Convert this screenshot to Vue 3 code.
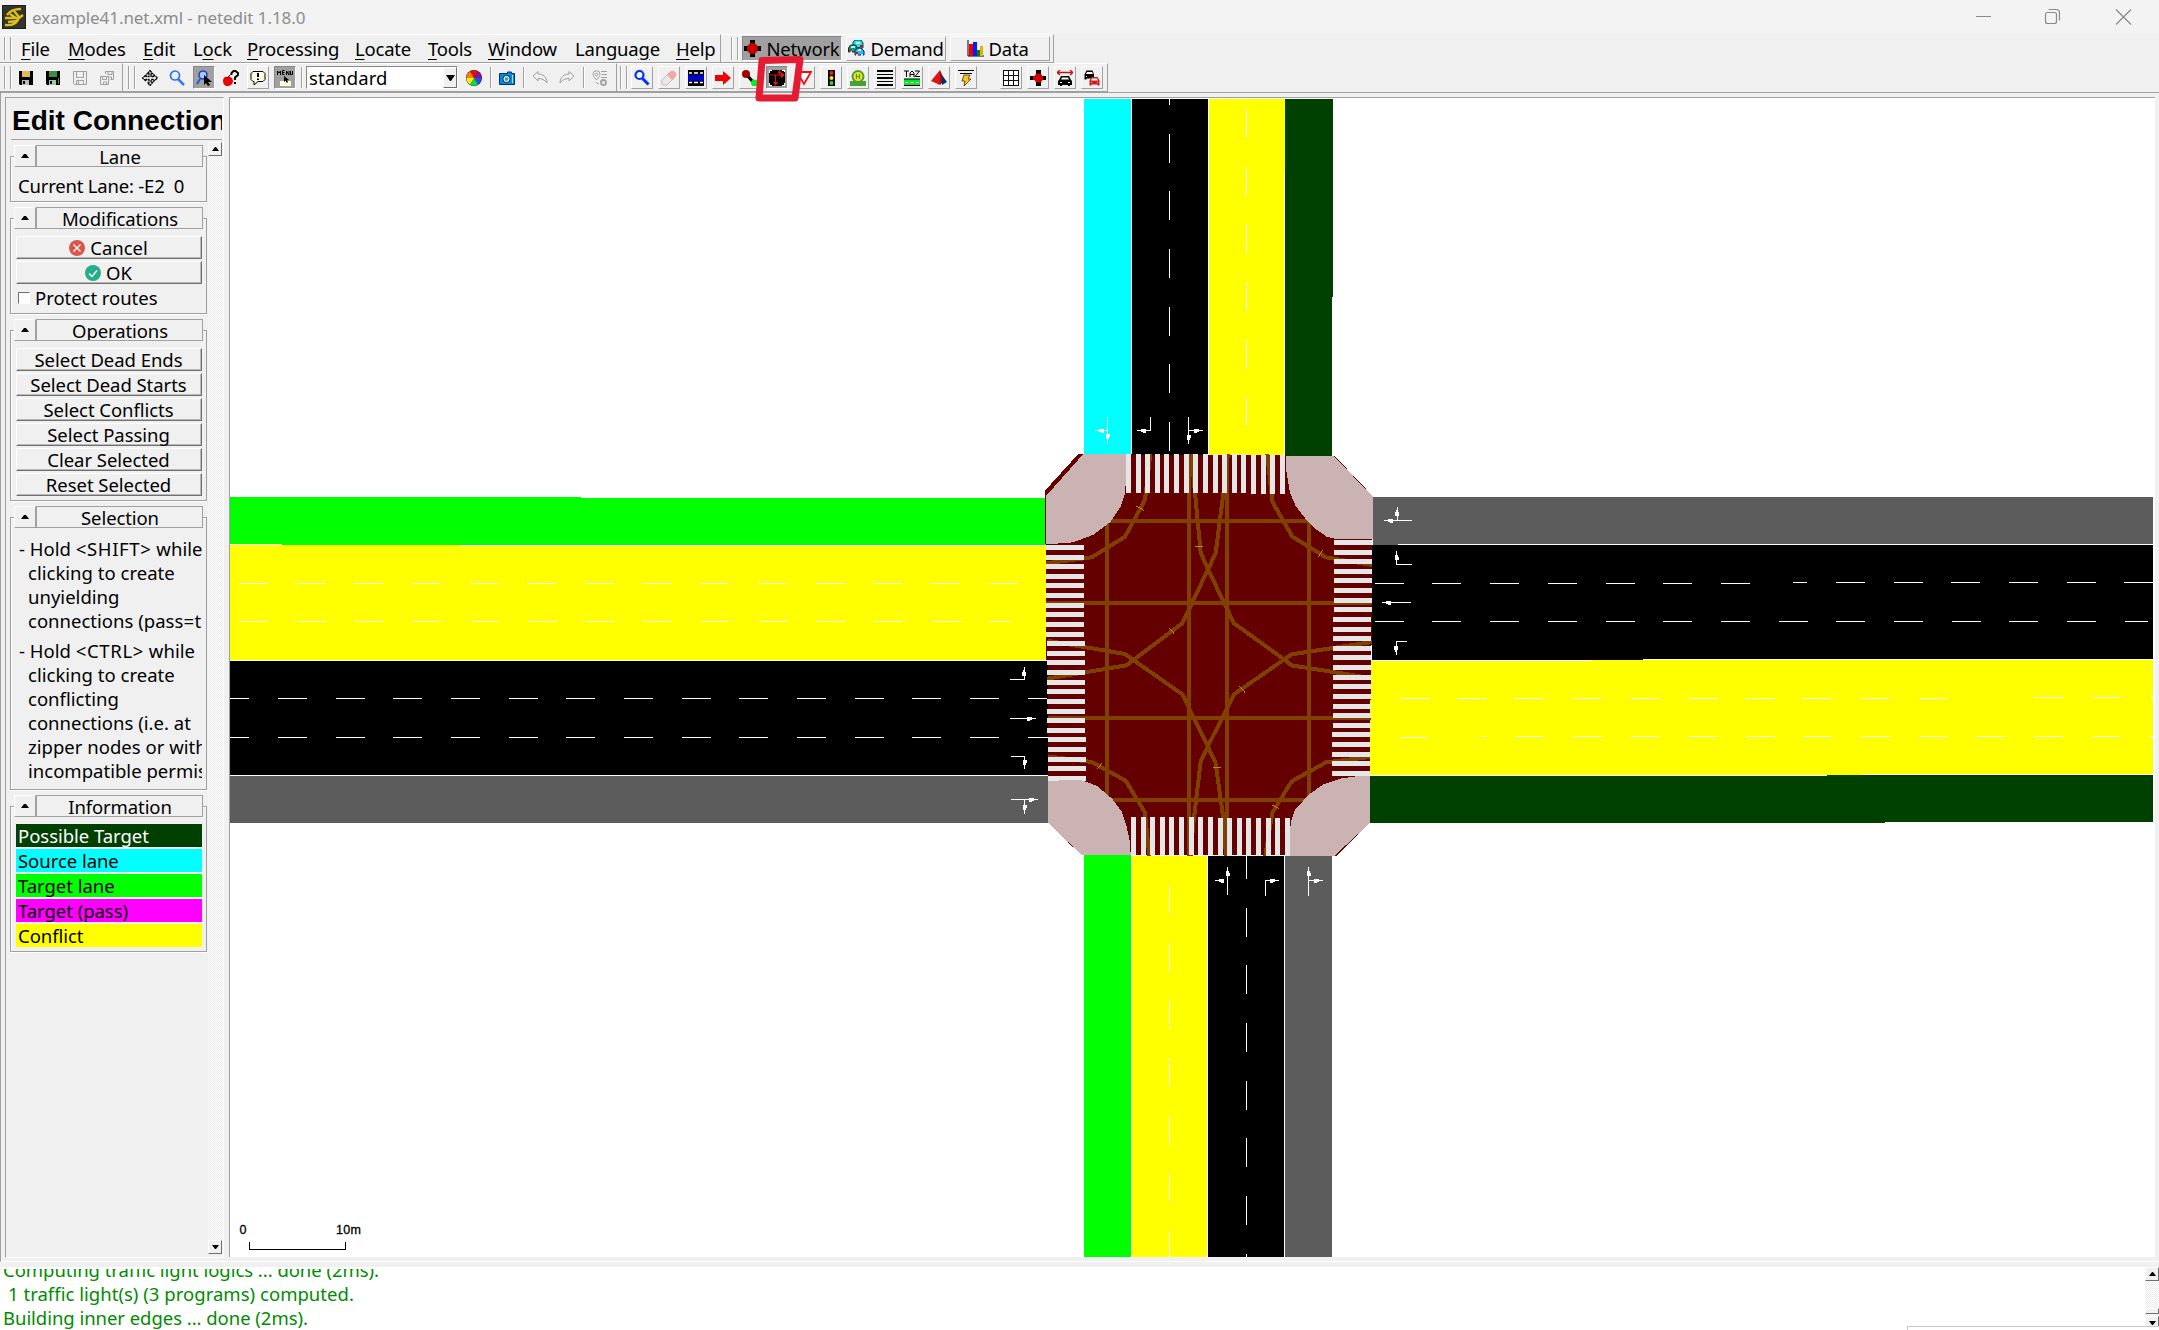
<script setup>
const menus = [
  { k: 'F', t: 'ile', w: 47 }, { k: 'M', t: 'odes', w: 75 }, { k: 'E', t: 'dit', w: 50 },
  { p: 'L', k: 'o', t: 'ck', w: 54 }, { k: 'P', t: 'rocessing', w: 108 }, { k: 'L', t: 'ocate', w: 73 },
  { k: 'T', t: 'ools', w: 60 }, { k: 'W', t: 'indow', w: 87 }, { p: 'Langua', k: 'g', t: 'e', w: 101 }, { k: 'H', t: 'elp', w: 55 }
]
const operations = ['Select Dead Ends', 'Select Dead Starts', 'Select Conflicts', 'Select Passing', 'Clear Selected', 'Reset Selected']
const legend = [
  { t: 'Possible Target', c: 'possible' }, { t: 'Source lane', c: 'source' }, { t: 'Target lane', c: 'target' },
  { t: 'Target (pass)', c: 'pass' }, { t: 'Conflict', c: 'conflict' }
]
const modes = ['inspect', 'delete', 'select', 'move', 'create', 'connection', 'prohibition', 'tls', 'stop', 'crossing', 'taz', 'shape', 'wire']
const views = ['grid', 'junction', 'spread', 'cars']

const range = n => [...Array(n).keys()]
const dashPath = (axis, fixed, start, n, min, max) => range(n).map(i => {
  const a = Math.max(min, Math.round(start + i * 57.68))
  const b = Math.min(max, Math.round(start + i * 57.68) + 29)
  if (b <= a) return ''
  return axis === 'h' ? `M${a} ${fixed}h${b - a}v1h${a - b}z` : `M${fixed} ${a}v${b - a}h1v${a - b}z`
}).join('')
const dashes = [
  dashPath('h', 583, 238.8, 14, 230, 1019), dashPath('h', 621, 239.4, 14, 230, 1011),
  dashPath('h', 698, 220.2, 15, 230, 1047), dashPath('h', 737, 220.2, 15, 230, 1048),
  dashPath('h', 583, 1374.8, 7, 1374, 2153), 'M1793 582h14v1h-14z', dashPath('h', 582, 1836, 6, 1374, 2153),
  dashPath('h', 621, 1374.8, 14, 1374, 2148),
  dashPath('h', 698, 1399.7, 10, 1374, 2153), dashPath('h', 697, 2034.6, 3, 1374, 2153),
  'M1400 737h28v1h-28zM1481 736h5v1h-5z', dashPath('h', 736, 1515, 12, 1374, 2153),
  dashPath('v', 1169, 76, 7, 99, 451), dashPath('v', 1246, 109, 6, 99, 426),
  dashPath('v', 1169, 885, 7, 856, 1257), dashPath('v', 1246, 850, 8, 856, 1257)
].join('')

const stripes = [
  ...range(17).map(i => ({ x: 1126 + i * 9.62, y: 454 + (i > 12 ? 1 : 0), w: 5, h: 39 })),
  ...range(17).map(i => ({ x: 1131 + i * 9.62, y: 817 + (i > 8 ? 1 : 0), w: 5, h: 38 })),
  ...range(25).map(i => ({ x: 1046 + Math.floor(i / 10), y: 545 + i * 9.62, w: 38, h: 5 })),
  ...range(25).map(i => ({ x: 1334 - Math.floor((i + 4) / 12), y: 540 + i * 9.62, w: 38, h: 5 }))
]

// direction, shaft path and arrow tip of each turn marking
const shafts = 'M1107 416v20M1107 430h-8M1150 416v14h-9M1188 416v20M1188 430h9M1227 894v-20M1265 895v-15h8M1308 895v-20M1308 880h9M1009 679h15v-6M1009 718h21M1010 756h14v8M1010 799h21M1024 799v10M1411 520h-21M1397 520v-8M1411 564h-15v-6M1410 602h-21M1406 641h-10v8'
const tips = [
  [1107.5, 443, 180], [1095, 430.5, 270], [1137, 430.5, 270], [1188.5, 444, 180], [1203, 430.5, 90],
  [1227.5, 867, 0], [1215, 880.5, 270], [1279, 880.5, 90], [1308.5, 867, 0], [1323, 880.5, 90],
  [1024, 667, 0], [1036, 718.5, 90], [1024.5, 769, 180], [1038, 799.5, 90], [1024.5, 814, 180],
  [1384, 520.5, 270], [1397, 507, 0], [1396.5, 551, 0], [1382, 602.5, 270], [1396, 655, 180]
]
</script>

<template>
  <div class="app">
    <header class="title">
      <svg class="logo" width="24" height="24" viewBox="0 0 24 24"><rect width="24" height="24" fill="#1d1d1a" /><rect x="1" y="1" width="22" height="22" fill="#34332c" /><path d="M5 10Q9 4 19 4M3 13h14l4-3M8 9l9 6M3 20q10 1 13-5M6 17l10-1M12 6l5 6" stroke="#dcc01c" stroke-width="2.400" fill="none" /></svg>
      <span class="caption">example41.net.xml - netedit 1.18.0</span>
      <svg class="winbtns" width="160" height="34" viewBox="1976 0 160 34" fill="none" stroke="#8a8a8a" stroke-width="1.2"><path d="M1976 16.500h15M2116 9.500l15 15M2131 9.500l-15 15" /><rect x="2045.500" y="12.500" width="11" height="11" rx="2" /><path d="M2048.500 9.500h7.500q3.500 0 3.500 3.500v7.500" /></svg>
    </header>

    <div class="bar menubar">
      <div class="dock menus">
        <i class="grip"></i>
        <nav><span v-for="m in menus" :key="m.t" :style="{ width: m.w + 'px' }">{{ m.p }}<u>{{ m.k }}</u>{{ m.t }}</span></nav>
      </div>
      <div class="dock supers">
        <i class="grip"></i>
        <button class="super on"><svg width="17" height="17" viewBox="0 0 17 17"><path d="M6 0h5v17H6zM0 6h17v5H0z" /><circle cx="8.500" cy="8.500" r="5.500" fill="#c80000" /></svg>Network</button>
        <button class="super"><svg width="17" height="17" viewBox="0 0 17 17"><path d="M5 5V2l2-2h6l2 3v5H5z" fill="#20e0e0" stroke="#045" /><path d="M.500 12V8l2-3h5l2 3v4z" fill="#00a080" stroke="#132" /><path d="M7 15v-4l2-3h4l3 3v4z" fill="#28b8ff" stroke="#024" /><path d="M3 7h4M8 3h4M10 10h3M2 12h2M8 15h2M13 15h2" stroke="#fff" stroke-width="1.500" /><path d="M1 10.500h2M12 6h3M8 13h2" stroke="#e00" stroke-width="2" /></svg>Demand</button>
        <button class="super data"><svg width="17" height="17" viewBox="0 0 17 17"><path d="M1 0v16h16" stroke="#000" fill="none" /><path d="M2 4h4v12H2z" fill="#e00" /><path d="M6 2h4v14H6z" fill="#0020ff" /><path d="M10 10h3v6h-3z" fill="#008000" /><path d="M13 6h3v10h-3z" fill="#e8b000" /></svg>Data</button>
      </div>
    </div>

    <div class="bar toolbar">
      <div class="dock files">
        <i class="grip"></i>
        <span class="tb"><svg viewBox="0 0 16 16"><path d="M1 1h14v14H2L1 14z" /><path d="M4 1h8v6H4z" fill="#ddb860" /><path d="M4 10h7v5H4z" fill="#bbb" /><path d="M5 11h2v3H5z" /></svg></span>
        <span class="tb"><svg viewBox="0 0 16 16"><path d="M1 1h14v14H2L1 14z" /><path d="M4 1h8v6H4zM13 8h1v6h-1z" fill="#3d8f46" /><path d="M4 10h7v5H4z" fill="#9c9" /><path d="M5 11h2v3H5z" /></svg></span>
        <span class="tb"><svg viewBox="0 0 16 16" class="dim"><path d="M1.500 1.500h13v13h-12l-1-1zM4.500 1.500v6h7v-6M4.500 14.500v-4h7v4M6.500 11v3" /></svg></span>
        <span class="tb"><svg viewBox="0 0 16 16" class="dim"><path d="M1.500 6.500h8v8h-8zM3.500 6.500v3h4v-3M4.500 14v-2h3v2M6.500 4V1.500h8v8h-3M9 1.500v3h4v-3M10.500 7h2v2" /></svg></span>
      </div>
      <div class="dock edit">
        <i class="grip"></i>
        <span class="tb"><svg viewBox="0 0 16 16"><path d="M8 .500l2.500 3H9v3h3V5l3.500 3-3.500 3V9.500H9v3h1.500L8 15.500l-2.500-3H7v-3H4V11L.500 8 4 5v1.500h3v-3H5.500z" fill="#fff" stroke="#000" stroke-width="1.300" stroke-dasharray="2.500 .500" /></svg></span>
        <span class="tb"><svg viewBox="0 0 16 16"><circle cx="6" cy="5.500" r="4.500" fill="#dff4ff" stroke="#3c6be0" stroke-width="1.700" /><path d="M9 9l6 6" stroke="#3a76f0" stroke-width="2.500" /></svg></span>
        <span class="tb on"><svg viewBox="0 0 16 16"><circle cx="7" cy="5" r="4" fill="#9fd0f0" stroke="#2040d0" stroke-width="1.600" /><path d="M4 9l-3 5M10 9l3 2" stroke="#2a55e0" stroke-width="2" /><path d="M8 5v10l2-2 2 3 2-1-2-3h4z" /></svg></span>
        <span class="tb"><svg viewBox="0 0 16 16"><path d="M4.500 7C2 6 0 8 0 11s2 5 4.500 5S10 14 10 11 7 6 4.500 7z" fill="#f00000" /><path d="M4.500 8l3-3.500" stroke="#000" /><path d="M8.500 5V3l2-2h2l2.500 2v2l-3 2.500V10" fill="none" stroke="#000" stroke-width="1.900" /><path d="M11 12h2v2h-2z" /></svg></span>
        <span class="tb up"><svg viewBox="0 0 16 16"><path d="M3 1.500h10l2 2v6l-2 2H8L4 15v-3.500H3l-2-2v-6z" fill="#ffffe4" stroke="#000" /><path d="M7 3h2v4H7zM7 8.500h2v1.500H7z" /></svg></span>
        <span class="tb on"><svg viewBox="0 0 16 16"><path d="M3 11h11v5H3z" fill="#ffffdc" /><path d="M.500 5V1l1.500 2L3.500 1v4M7.500.500h-2v4h2M5.500 2.500h2M9.500 5V1l2.500 4V1M13.500 1v3.500h2V1" fill="none" stroke="#000" /><path d="M7 6v6l1.500-1.500L10 13l1-1-1-2h2z" /></svg></span>
        <i class="sep first"></i>
        <div class="combo"><span>standard</span><b><svg width="9" height="6" viewBox="0 0 9 6"><path d="M0 0h9L5 6H4z" /></svg></b></div>
        <span class="tb"><svg viewBox="0 0 16 16"><circle cx="8" cy="8" r="8" fill="#222" /><path d="M8 8L4 1.500A7.500 7.500 0 0 1 12 1.500z" fill="#e01010" /><path d="M8 8l4-6.500A7.500 7.500 0 0 1 15.500 8z" fill="#90109a" /><path d="M8 8h7.500a7.500 7.500 0 0 1-3.500 6.500z" fill="#2050f0" /><path d="M8 8l4 6.500a7.500 7.500 0 0 1-8 0z" fill="#10d840" /><path d="M8 8l-4 6.500A7.500 7.500 0 0 1 .500 8z" fill="#f4f010" /><path d="M8 8H.500A7.500 7.500 0 0 1 4 1.500z" fill="#ff8000" /></svg></span>
        <i class="sep"></i>
        <span class="tb"><svg viewBox="0 0 16 16"><path d="M.500 3.500h8V2h4v1.500h3v11H.500z" fill="#0787e8" stroke="#00305c" /><circle cx="7.500" cy="9" r="3.600" fill="#fff" stroke="#002a50" /><circle cx="7.500" cy="9" r="2" fill="#3a9" /><path d="M13.500 5v8" stroke="#9ee0ff" /></svg></span>
        <i class="sep"></i>
        <span class="tb"><svg viewBox="0 0 16 16" class="dim"><path d="M1 6l5-4.500V4c5 0 9 3 9 9-2-3-5-4.500-9-4.500V11z" /></svg></span>
        <span class="tb"><svg viewBox="0 0 16 16" class="dim"><path d="M15 6l-5-4.500V4c-5 0-9 3-9 9 2-3 5-4.500 9-4.500V11z" /></svg></span>
        <i class="sep"></i>
        <span class="tb"><svg viewBox="0 0 16 16" class="dim"><path d="M4.500 10C2 7 1 6 1 4.200a3.500 3.500 0 0 1 7 0C8 6 7 7 4.500 10zM9 1.500h6M10 4.500h5M9 7.500h6M4 12q1 2 3 2" /><circle cx="4.500" cy="4.500" r="1.300" /><circle cx="11.500" cy="12.500" r="2.500" stroke-width="1.800" /></svg></span>
      </div>
      <div class="dock modes">
        <i class="grip"></i>
        <span v-for="m in modes" :key="m" class="tb up" :class="{ on: m === 'connection' }">
          <svg viewBox="0 0 16 16">
            <template v-if="m === 'inspect'"><circle cx="5.500" cy="5" r="4" fill="#fff" stroke="#0030ff" stroke-width="2.200" /><path d="M8.500 8.500l6 6" stroke="#0030ff" stroke-width="3" /></template>
            <template v-if="m === 'delete'"><path d="M1 10l8-8q2-1.500 5 0 2 3 0 5l-8 8q-3 1-5-1-1-2 0-4z" fill="#eee6e6" stroke="#aaa" stroke-width=".700" /><path d="M6 5l3-3q2-1.500 5 0 2 3 0 5l-3 3z" fill="#f0a8a8" /></template>
            <template v-if="m === 'select'"><path d="M0 0h16v16H0z" /><path d="M0 5h16v6H0z" fill="#0000c8" /><path d="M1 3h3M6 3h4M12 3h3M1 12.500h3M6 12.500h4M12 12.500h3" stroke="#fff" stroke-width="1.300" /></template>
            <path v-if="m === 'move'" d="M0 5h8V1l8 7-8 7v-4H0z" fill="#f00000" />
            <template v-if="m === 'create'"><path d="M5 5l6 7" stroke="#000" stroke-width="3" /><circle cx="4" cy="4" r="4" fill="#a00000" /><circle cx="12.500" cy="13" r="3.500" fill="#00f020" /></template>
            <template v-if="m === 'connection'"><path d="M0 0h16v16H0z" /><path d="M1 5h13M6.500 5v9M10.500 5V1" fill="none" stroke="#e01010" stroke-width="1.200" /><path d="M4 12h5l-2.500 4zM12 2l4 3-4 3zM8.500 3h4l-2-3z" fill="#f01010" /><path d="M0 0h3v1H1v2H0zM13 0h3v2h-1V1h-2zM0 13h1v2h2v1H0zM15 13h1v3h-3v-1h2z" fill="#fff" /></template>
            <path v-if="m === 'prohibition'" d="M1 2h14L8 14z" fill="#fff" stroke="#f01010" stroke-width="1.800" />
            <template v-if="m === 'tls'"><path d="M5 0h7v16H5z" /><circle cx="8.500" cy="3" r="2" fill="#f02020" /><circle cx="8.500" cy="8" r="2" fill="#ffe020" /><circle cx="8.500" cy="13" r="2" fill="#20e020" /></template>
            <template v-if="m === 'stop'"><circle cx="8" cy="6.500" r="6.500" fill="#48a038" /><path d="M0 11h16v5H0z" fill="#48a038" /><circle cx="8" cy="6.500" r="4.500" fill="#f4e020" /><path d="M6.500 4v5M9.500 4v5M6.500 6.500h3" stroke="#48a038" stroke-width="1.200" /></template>
            <path v-if="m === 'crossing'" d="M0 0h16v2H0zM0 4h16v1H0zM0 7h16v2H0zM0 11h16v1H0zM0 14h16v2H0z" />
            <template v-if="m === 'taz'"><path d="M0 1h5M2.500 1v6M6 7V3l2-2 2 2v4M6 4.500h4M11 1h4.500L11 6.500h5" fill="none" stroke="#000" /><path d="M0 9h16v7H0z" fill="#00e820" /><path d="M0 9h16M0 15.500h16" stroke="#000" /><path d="M1 12.500h3M6 12.500h4M12 12.500h3" stroke="#fff" /></template>
            <template v-if="m === 'shape'"><path d="M9 0L0 11l9 4z" fill="#d81818" /><path d="M9 0v15l3-3V7z" fill="#901010" /><path d="M11 5l5 7-5 3z" fill="#003070" /></template>
            <template v-if="m === 'wire'"><path d="M0 .500h16M2 3.500h12" stroke="#000" /><path d="M6 5h6l-2 4h3l-7 7 1-5H4z" fill="#ffc820" stroke="#403000" stroke-width=".800" /></template>
          </svg>
        </span>
        <i class="gap"></i>
        <span v-for="v in views" :key="v" class="tb up">
          <svg viewBox="0 0 16 16">
            <path v-if="v === 'grid'" d="M.500.500h15v15H.500zM.500 5.500h15M.500 10.500h15M5.500.500v15M10.500.500v15" fill="#fff" stroke="#111" shape-rendering="crispEdges" />
            <template v-if="v === 'junction'"><path d="M6 0h5v16H6zM0 6h16v4H0z" /><path d="M3 6h10v4H3z" fill="#d00000" /><circle cx="8.500" cy="8" r="4.500" fill="#d00000" /></template>
            <template v-if="v === 'spread'"><path d="M1 2.500h14M3 0L0 2.500 3 5M13 0l3 2.500L13 5" fill="none" stroke="#c01010" stroke-width="1.300" /><path d="M4 6h8l2 4 1 1v4h-2v1h-2v-1H5v1H3v-1H1v-4l1-1z" /><path d="M5 7.500h6l1 2H4zM3 12h2v1H3zM11 12h2v1h-2z" fill="#fff" /></template>
            <template v-if="v === 'cars'"><path d="M2.500.500h6l1.500 4v5H8v-1H2.500v1h-2v-5z" /><path d="M3 2h5l1 2H2z" fill="#fff" /><path d="M7.500 7h6l2 3.500v5h-2v-1h-6v1h-2v-5z" fill="#d01818" /><path d="M8 8.500h5l1 2H7z" fill="#fff" /><path d="M7 12h1v1H7zM13 12h1v1h-1zM2 6h1v1H2z" fill="#fff" /></template>
          </svg>
        </span>
      </div>
      <svg class="marker" width="60" height="56" viewBox="750 52 60 56"><path d="M762 60.500l38-1-5 38.500h-36z" fill="none" stroke="#e31b33" stroke-width="7" stroke-linejoin="round" /></svg>
    </div>

    <main>
      <aside>
        <h1>Edit Connection</h1>
        <div class="scrollarea">
          <div class="groups">
            <section class="g-lane">
              <header><b><svg width="8" height="4" viewBox="0 0 8 4"><path d="M0 4h8L5 0H3z" /></svg></b><span>Lane</span></header>
              <p class="lane">Current Lane: -E2&nbsp; 0</p>
            </section>
            <section class="g-mod">
              <header><b><svg width="8" height="4" viewBox="0 0 8 4"><path d="M0 4h8L5 0H3z" /></svg></b><span>Modifications</span></header>
              <div class="stack">
                <button><svg width="16" height="16" viewBox="0 0 16 16"><circle cx="8" cy="8" r="8" fill="#d9574a" /><path d="M4.500 4.500l7 7M11.500 4.500l-7 7" stroke="#fff" stroke-width="1.300" /></svg>Cancel</button>
                <button><svg width="16" height="16" viewBox="0 0 16 16"><circle cx="8" cy="8" r="8" fill="#26ad89" /><path d="M4 8.500l3 3 5-6" fill="none" stroke="#fff" stroke-width="1.400" /></svg>OK</button>
                <label><i></i>Protect routes</label>
              </div>
            </section>
            <section class="g-ops">
              <header><b><svg width="8" height="4" viewBox="0 0 8 4"><path d="M0 4h8L5 0H3z" /></svg></b><span>Operations</span></header>
              <div class="stack"><button v-for="o in operations" :key="o">{{ o }}</button></div>
            </section>
            <section class="g-sel">
              <header><b><svg width="8" height="4" viewBox="0 0 8 4"><path d="M0 4h8L5 0H3z" /></svg></b><span>Selection</span></header>
              <div class="hints">
                <p>- Hold <em>&lt;SHIFT&gt;</em> while<br>clicking to create<br>unyielding<br>connections (pass<em>=</em>true)</p>
                <p>- Hold <em>&lt;CTRL&gt;</em> while<br>clicking to create<br>conflicting<br>connections (i.e. at<br>zipper nodes or with<br>incompatible permissions)</p>
              </div>
            </section>
            <section class="g-info">
              <header><b><svg width="8" height="4" viewBox="0 0 8 4"><path d="M0 4h8L5 0H3z" /></svg></b><span>Information</span></header>
              <div class="stack"><div v-for="l in legend" :key="l.t" class="key" :class="l.c">{{ l.t }}</div></div>
            </section>
          </div>
          <div class="scroll">
            <b><svg width="7" height="4" viewBox="0 0 7 4"><path d="M0 4h7L4 0H3z" /></svg></b>
            <b><svg width="7" height="4" viewBox="0 0 7 4"><path d="M0 0h7L4 4H3z" /></svg></b>
          </div>
        </div>
      </aside>

      <div class="canvas">
        <svg width="1924" height="1159" viewBox="230 98 1924 1159" shape-rendering="crispEdges">
          <!-- junction area -->
          <path transform="translate(1030 400) scale(.33333)" fill="#640000" d="M145 162h260v2h360l2 4h147l114 120-3 410-7 571-97 99h-150v-2H155L54 1269 48 700 45 272z" />
          <!-- lanes -->
          <path fill="#00ff00" d="M230 497h351v1h464v46h1v1H230zM1084 855h47v402h-47z" />
          <path fill="#ffff00" d="M230 545h816v115H230zM1209 99h76v356h-76zM1371 660h782v115h-783v-75h1zM1132 856h75v401h-75z" />
          <path fill="#00ffff" d="M1084 99h47v355h-47z" />
          <path fill="#000" d="M230 661h818v114H230zM1132 99h76v356h-76zM1372 545h781v114h-510v1h-271zM1208 856h76v401h-76z" />
          <path fill="#5c5c5c" d="M230 776h818v47H230zM1373 497h780v48h-780zM1285 856h47v401h-47z" />
          <path fill="#004000" d="M1285 99h48v198h-1v159h-47zM1370 776h457v-1h326v47h-268v1h-515z" />
          <path fill="#fff" d="M230 544h52v1h-52zM460 545h586v1H460zM230 660h818v1H230zM230 775h818v1H230zM1398 544h755v1h-755zM1371 660h220v1h-220zM1643 659h510v1h-510zM1370 775h457v1h-457zM1863 774h290v1h-290zM1131 99h1v355h-1zM1208 99h1v356h-1zM1284 173h1v282h-1zM1131 856h1v401h-1zM1207 856h1v401h-1zM1284 856h1v401h-1z" />
          <path fill="#fff" :d="dashes" />
          <!-- connections -->
          <g transform="translate(1030 400) scale(.33333)">
            <g fill="none" stroke="#804000" stroke-width="12">
              <path d="M231 340v860M477 162v1206M591 162v1206M837 340v860M200 363h670M48 609h978M54 954h968M200 1200h670" />
              <path d="M361 162l-16 138-60 110-100 62-137 18M712 162l15 143 60 105 101 62 138 23M54 1069l131 17 102 56 58 96 13 130M1020 1071l-132 16-103 57-58 94-21 130" />
              <path d="M484 162l28 296 22 50 78 162 150 108 22 18 238 38M594 162l-14 118-23 180-100 210-147 110-20 16-125 21-114 19M52 722l233 40 25 18 147 103 23 47 54 110 23 50 23 165 8 113M1026 726l-241 37-25 17-148 103-78 155-22 47-22 185-8 98" />
            </g>
            <path d="M318 318l24 13M496 440h22M865 472l13-22M418 685l16 18M629 859l16 19M549 1102h24M202 1108l13-18M726 1215l21 11" fill="none" stroke="#c08040" stroke-width="3" />
          </g>
          <rect v-for="(s, i) in stripes" :key="i" :x="Math.round(s.x)" :y="Math.round(s.y)" :width="s.w" :height="s.h" fill="#e6e6e6" />
          <path transform="translate(1030 400) scale(.33333)" fill="#ccb3b3" d="M160 162L48 288v144l48-2 34-3 60-23 50-37 33-49 12-38 3-40v-78zM767 168v32l13 78 17 40 31 40 30 30 32 22 30 8h108V290L912 168zM54 1143l46-2h55l45 16 45 38 30 40 15 45 10 45 2 40H155L54 1269zM1020 1127l-35 1-50 7-55 18-45 32-40 45-12 35-3 25v78h132l108-99z" />
          <!-- turn markings -->
          <path :d="shafts" transform="translate(.5 .5)" fill="none" stroke="#fff" />
          <path v-for="(t, i) in tips" :key="'t' + i" d="M-.5 0h1v3l1.500 3v3h-4v-3l1.500-3z" fill="#fff" :transform="`translate(${t[0]} ${t[1]}) rotate(${t[2]})`" />
          <path d="M249.500 1242v7.500h96v-7.500" fill="none" stroke="#000" />
          <text x="239.500" y="1234">0</text><text x="336" y="1234" textLength="25">10m</text>
        </svg>
      </div>
    </main>

    <footer>
      <div class="log"><p>Computing traffic light logics ... done (2ms).</p><p class="in">1 traffic light(s) (3 programs) computed.</p><p>Building inner edges ... done (2ms).</p></div>
      <div class="logscroll">
        <b><svg width="7" height="4" viewBox="0 0 7 4"><path d="M0 4h7L4 0H3z" /></svg></b>
        <b class="thumb"></b>
        <b class="down"><svg width="7" height="4" viewBox="0 0 7 4"><path d="M0 0h7L4 4H3z" /></svg></b>
      </div>
      <div class="popup"></div>
    </footer>
  </div>
</template>

<style>
body { margin: 0; overflow: hidden; }
</style>

<style scoped>
* { box-sizing: border-box; }
.app { width: 2159px; height: 1330px; display: flex; flex-direction: column; background: #f0f0f0; color: #000; font: 18.5px/24px "Noto Sans", "Open Sans", sans-serif; letter-spacing: -.2px; overflow: hidden; white-space: nowrap; }
svg { display: block; flex: none; }
p, h1 { margin: 0; }
em { font-style: normal; letter-spacing: .65px; }
button { font: inherit; letter-spacing: inherit; color: inherit; margin: 0; padding: 0; background: #f0f0f0; border-radius: 0; display: flex; align-items: center; justify-content: center; }
.title { height: 34px; flex: none; background: #f3f3f3; display: flex; align-items: center; padding: 0 23px 0 2px; color: #8c8c8c; }
.caption { font-size: 17px; margin-left: 6px; flex: 1; letter-spacing: -.07px; padding-top: 1px; }
.bar { display: flex; flex: none; }
.menubar { height: 29px; }
.dock { display: flex; align-items: center; border-top: 1px solid #fff; border-right: 1px solid #a0a0a0; border-bottom: 1px solid #a0a0a0; height: 29px; }
.grip { width: 7px; height: 23px; flex: none; border: solid #a0a0a0; border-width: 0 1px; box-shadow: inset 1px 0 #fff, 1px 0 #fff; }
.menus { width: 721px; padding-left: 4px; }
nav { display: flex; margin-left: 10px; line-height: 26px; }
nav span { flex: none; }
u { text-decoration-thickness: 1px; text-underline-offset: 3px; }
.supers { width: 333px; padding-left: 10px; }
.super { height: 25px; width: 100px; margin-left: 4px; gap: 5px; border: 1px solid; border-color: #fff #a0a0a0 #a0a0a0 #fff; }
.super.on { background: #a0a0a0; border-color: #888 #fff #fff #888; }
.super.data { padding-right: 4px; gap: 4px; }
.toolbar { height: 30px; position: relative; border-bottom: 1px solid #a0a0a0; }
.toolbar .dock { height: 29px; }
.files { width: 123px; padding-left: 4px; }
.edit { width: 494px; padding-left: 5px; }
.modes { width: 491px; padding-left: 3px; }
.tb { width: 22px; height: 23px; margin-left: 5px; flex: none; display: flex; align-items: center; justify-content: center; border: 1px solid transparent; }
.tb svg { width: 16px; height: 16px; }
.files .grip + .tb, .edit .grip + .tb, .modes .grip + .tb { margin-left: 4px; }
.tb.up { border-color: #fff #a0a0a0 #a0a0a0 #fff; }
.tb.on { background: #a0a0a0; border-color: #888 #fff #fff #888; }
.dim { fill: none; stroke: #a0a0a0; stroke-width: 1; }
.sep { width: 1px; height: 21px; background: #a0a0a0; margin: 0 0 0 5px; box-shadow: 1px 0 #fff; flex: none; }
.sep + .tb { margin-left: 5px; }
.combo { width: 152px; height: 23px; margin-left: 4px; background: #fff; border: 1px solid; border-color: #888 #fff #fff #888; display: flex; flex: none; line-height: 22px; letter-spacing: .1px; }
.combo span { flex: 1; padding-left: 2px; }
.combo b { width: 14px; height: 21px; background: #f0f0f0; border: 1px solid; border-color: #fff #707070 #707070 #fff; display: grid; place-items: center; }
.combo + .tb { margin-left: 5px; }
.gap { width: 18px; flex: none; }
.marker { position: absolute; left: 750px; top: -11px; }
main { flex: none; height: 1169px; display: flex; padding: 4px 4px 0 5px; border-left: 1px solid #a0a0a0; border-bottom: 1px solid #fff; }
aside { width: 219px; height: 1161px; border: 1px solid; border-color: #a0a0a0 #fff #fff #a0a0a0; margin-left: -1px; padding: 0 1px 0 5px; }
h1 { font: bold 28px/36px "Liberation Sans", Arial, sans-serif; letter-spacing: 0; height: 42px; padding: 5px 0 0 1px; overflow: hidden; border-bottom: 1px solid #a0a0a0; margin-top: 0; width: 211px; }
.scrollarea { display: flex; margin-left: -1px; padding-top: 3px; }
.groups { width: 198px; padding-top: 2px; }
section { position: relative; margin-bottom: 4px; width: 197px; overflow: hidden; }
section::before { content: ""; position: absolute; inset: 11px 0 1px 0; border: 1px solid #a0a0a0; box-shadow: 1px 1px #fff, inset 1px 1px #fff; }
section > * { position: relative; }
section header { display: flex; height: 22px; margin: 0 4px; background: #f0f0f0; }
section header b { width: 22px; border: 1px solid; border-color: #fff #a0a0a0 #a0a0a0 #fff; display: grid; place-items: center; }
section header span { flex: 1; border: 1px solid #a0a0a0; line-height: 22px; text-align: center; overflow: hidden; letter-spacing: -.1px; padding-left: 1px; }
.g-lane { height: 58px; } .g-mod { height: 108px; } .g-ops { height: 183px; } .g-sel { height: 285px; } .g-info { height: 158px; }
.lane { padding: 7px 0 0 8px; }
.stack { display: flex; flex-direction: column; gap: 2px; padding: 7px 5px 0 6px; letter-spacing: -.04px; }
.stack button { height: 23px; gap: 5px; border: 1px solid; border-color: #fff #707070 #707070 #fff; line-height: 22px; box-shadow: inset -1px -1px #b8b8b8; padding-right: 1px; }
.stack label { display: flex; align-items: center; gap: 5px; height: 24px; padding-left: 2px; }
.stack label i { width: 12px; height: 12px; background: #fff; border: 1px solid; border-color: #707070 #fff #fff #707070; }
.hints { margin: 9px 5px 0 9px; overflow: hidden; letter-spacing: .02px; }
.hints p { padding-left: 9px; text-indent: -9px; margin-bottom: 6px; }
.key { height: 23px; line-height: 24px; padding-left: 2px; overflow: hidden; }
.possible { background: #004000; color: #fff; } .source { background: #0ff; } .target { background: #0f0; } .pass { background: #f0f; } .conflict { background: #ff0; }
.scroll { width: 14px; height: 1112px; display: flex; flex-direction: column; justify-content: space-between; }
.scroll, .logscroll { background: repeating-conic-gradient(#fff 0 25%, #ececec 0 50%) 0 0 / 2px 2px; }
.scroll b, .logscroll b { height: 14px; background: #f0f0f0; border: 1px solid; border-color: #fff #707070 #707070 #fff; display: grid; place-items: center; }
.scroll { margin-top: -1px; }
.canvas { width: 1926px; height: 1160px; margin-left: 5px; background: #fff; border: solid #a0a0a0; border-width: 1px 0 0 1px; overflow: hidden; }
.canvas text { font: 12.500px "Liberation Sans", Arial, sans-serif; fill: #000; letter-spacing: 0; stroke: #000; stroke-width: .3; }
footer { flex: 1; display: flex; position: relative; padding-top: 5px; }
.log { flex: 1; background: #fff; height: 63px; padding-left: 3px; color: #008c00; overflow: hidden; border-top: 2px solid #fff; display: flex; flex-direction: column; justify-content: flex-end; letter-spacing: -.04px; }
.log p { flex: none; }
.log .in { padding-left: 5px; letter-spacing: .03px; }
.logscroll { width: 14px; height: 63px; display: flex; flex-direction: column; }
.logscroll .thumb { height: 7px; margin-top: 27px; }
.logscroll .down { margin-top: 2px; }
.popup { position: absolute; left: 1907px; top: 64px; width: 260px; height: 12px; background: #fff; border: 1px solid #c8c8c8; }
</style>
